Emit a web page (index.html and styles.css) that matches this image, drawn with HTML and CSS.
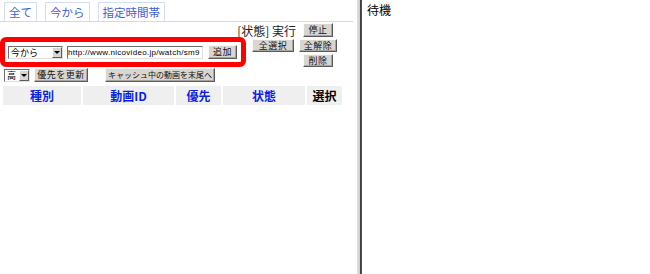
FILE: index.html
```html
<!DOCTYPE html>
<html lang="ja">

<head>
    <meta charset="UTF-8">
    <title>予約リスト</title>
    <link rel="stylesheet" href="styles.css">
</head>

<body>
    <div class="app">
        <div class="pane-left">
            <div class="tabs">
                <a class="tab">全て</a>
                <a class="tab">今から</a>
                <a class="tab">指定時間帯</a>
            </div>

            <div class="top">
                <div class="top-main">
                    <div class="status">[状態] 実行</div>
                    <div class="add-row">
                        <div class="add-box">
                            <div class="select sel-when"><span class="select-text">今から</span><span class="select-arrow"></span></div>
                            <div class="url-input">http://www.nicovideo.jp/watch/sm9</div>
                            <button class="btn btn-add">追加</button>
                        </div>
                        <button class="btn btn-selall">全選択</button>
                    </div>
                </div>
                <div class="top-side">
                    <button class="btn btn-stop">停止</button>
                    <button class="btn btn-clear">全解除</button>
                    <button class="btn btn-del">削除</button>
                </div>
            </div>

            <div class="prio-row">
                <div class="select sel-prio"><span class="select-text">高</span><span class="select-arrow"></span></div>
                <button class="btn btn-prio">優先を更新</button>
                <button class="btn btn-cache">キャッシュ中の動画を末尾へ</button>
            </div>

            <table class="list">
                <thead>
                    <tr>
                        <th class="col-kind"><a>種別</a></th>
                        <th class="col-id"><a>動画ID</a></th>
                        <th class="col-prio"><a>優先</a></th>
                        <th class="col-state"><a>状態</a></th>
                        <th class="col-check">選択</th>
                    </tr>
                </thead>
            </table>
        </div>

        <div class="splitter"></div>

        <div class="pane-right">待機</div>
    </div>
</body>

</html>
```

FILE: styles.css
```css
* {
    margin: 0;
    padding: 0;
    box-sizing: border-box;
}

body {
    background: #fff;
    font-family: "Noto Sans CJK JP", "DejaVu Sans", sans-serif;
    font-size: 12px;
    color: #000;
}

.app {
    display: flex;
    height: 274px;
}

.pane-left {
    width: 357px;
}

.splitter {
    width: 5px;
    background: linear-gradient(to right, #e4e1dc 0, #d0cdc8 3px, #3a3a3a 3px, #555 5px);
}

.pane-right {
    flex: 1;
    padding: 2px 5px;
    line-height: 15px;
}

/* tabs */
.tabs {
    display: flex;
    gap: 8px;
    width: 353px;
    padding: 2px 0 0 4px;
    border-bottom: 1px solid #cddbec;
}

.tab {
    height: 19px;
    padding: 0 4px;
    border: 1px solid #d3def0;
    border-bottom: none;
    color: #3f5fd6;
    font-size: 11.5px;
    line-height: 18px;
}

/* buttons */
.btn {
    display: flex;
    align-items: center;
    justify-content: center;
    height: 14px;
    padding: 0;
    white-space: nowrap;
    overflow: hidden;
    background: #d9d6d1;
    border: 1px solid;
    border-color: #fafafa #5a5a5a #5a5a5a #fafafa;
    box-shadow: inset -1px -1px #a9a6a1;
    font-family: inherit;
    font-size: 9px;
    line-height: 12px;
    letter-spacing: 0.5px;
    color: #111;
}

/* selects */
.select {
    display: flex;
    height: 13px;
    background: #fff;
    border: 1px solid;
    border-color: #6f6f6f #e0e0e0 #e0e0e0 #6f6f6f;
}

.select-text {
    flex: 1;
    padding-left: 2px;
    font-size: 9px;
    line-height: 11px;
}

.select-arrow {
    position: relative;
    width: 10px;
    background: #d9d6d1;
    border: 1px solid;
    border-color: #fafafa #5a5a5a #5a5a5a #fafafa;
}

.select-arrow::after {
    content: "";
    position: absolute;
    left: 1px;
    top: 3px;
    border-left: 3px solid transparent;
    border-right: 3px solid transparent;
    border-top: 3px solid #000;
}

/* top controls */
.top {
    display: flex;
}

.top-main {
    width: 296px;
}

.status {
    height: 15px;
    text-align: right;
    line-height: 15px;
    padding-top: 1px;
    color: #222;
}

.add-row {
    display: flex;
    align-items: flex-start;
}

.add-box {
    display: flex;
    align-items: center;
    width: 246px;
    height: 30px;
    padding-left: 3px;
    border: 5px solid #f00;
    border-radius: 6px;
}

.sel-when {
    width: 55px;
}

.url-input {
    width: 136px;
    height: 13px;
    margin-left: 4px;
    overflow: hidden;
    white-space: nowrap;
    border: 1px solid;
    border-color: #6f6f6f #e0e0e0 #e0e0e0 #6f6f6f;
    font-family: "Liberation Sans", sans-serif;
    font-size: 8px;
    line-height: 11px;
    letter-spacing: 0.3px;
}

.btn-add {
    width: 29px;
    margin-left: 5px;
}

.btn-selall {
    width: 42px;
    height: 13px;
    margin: 2px 0 0 6px;
}

.top-side {
    display: flex;
    flex-direction: column;
    align-items: center;
    gap: 2px;
    width: 38px;
    margin-left: 3px;
    padding-top: 1px;
}

.btn-stop {
    width: 30px;
}

.btn-clear {
    width: 38px;
    height: 13px;
}

.btn-del {
    width: 30px;
    height: 13px;
}

/* priority row */
.prio-row {
    display: flex;
    align-items: center;
    margin-top: 1px;
    padding-left: 4px;
}

.sel-prio {
    width: 26px;
}

.btn-prio {
    width: 54px;
    margin-left: 4px;
}

.btn-cache {
    width: 110px;
    margin-left: 17px;
    font-size: 8px;
    letter-spacing: 0;
}

/* list */
.list {
    width: 339px;
    margin: 4px 0 0 3px;
    border-collapse: collapse;
    table-layout: fixed;
}

.list th {
    height: 19px;
    background: #efefef;
    border-left: 2px solid #fff;
    font-size: 12px;
    line-height: 19px;
    font-weight: bold;
}

.list th:first-child {
    border-left: none;
}

.list th a {
    color: #0a1ee8;
}

.col-kind { width: 79px; }
.col-id { width: 93px; }
.col-prio { width: 47px; }
.col-state { width: 84px; }
.col-check { width: 36px; }
```
